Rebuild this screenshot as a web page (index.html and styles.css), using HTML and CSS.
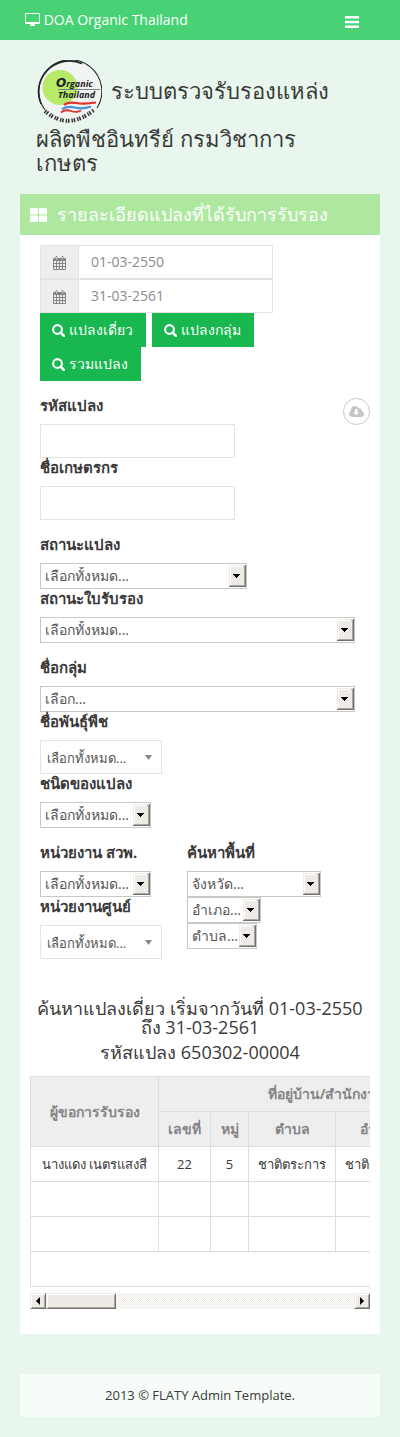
FILE: index.html
```
<!DOCTYPE html>
<html lang="th">
<head>
<meta charset="utf-8">
<meta name="viewport" content="width=device-width, initial-scale=1">
<title>DOA Organic Thailand</title>
<link rel="stylesheet" href="styles.css">
</head>
<body>
<svg class="defs" aria-hidden="true">
  <symbol id="calendar" viewBox="0 0 13 14"><path fill="currentColor" fill-rule="evenodd" d="M1 2h1.500V1Q2.500 0 3.500 0T4.500 1V2h4V1Q8.500 0 9.500 0T10.500 1V2H12Q13 2 13 3V13Q13 14 12 14H1Q0 14 0 13V3Q0 2 1 2ZM1 5V7H3V5ZM4 5V7H6V5ZM7 5V7H9V5ZM10 5V7H12V5ZM1 8V10H3V8ZM4 8V10H6V8ZM7 8V10H9V8ZM10 8V10H12V8ZM1 11V13H3V11ZM4 11V13H6V11ZM7 11V13H9V11ZM10 11V13H12V11ZM3.200 1V3.500H3.900V1ZM9.200 1V3.500H9.900V1Z"/></symbol>
  <symbol id="search" viewBox="0 0 13 13"><circle cx="5.500" cy="5.500" r="4.400" fill="none" stroke="currentColor" stroke-width="2.100"/><path d="M8.700 8.700L12 12" stroke="currentColor" stroke-width="2.500" stroke-linecap="round"/></symbol>
  <symbol id="drop" viewBox="0 0 17 22"><path fill="#eeebe6" d="M0 0h17v22H0z"/><path fill="#fff" d="M1 1h14v1H2v18H1z"/><path fill="#aaa6a0" d="M14 2h1v18H1v1h15V1h-2z"/><path fill="#73716d" d="M16 0h1v22H0v-1h16z"/><path d="M4 9h7v1h-1v1H9v1H8v1H7v-1H6v-1H5v-1H4z"/></symbol>
</svg>

<header class="navbar">
  <a class="brand" href="#"><svg width="15" height="13" viewBox="0 0 15 13" aria-hidden="true"><path fill="currentColor" fill-rule="evenodd" d="M1 0H14Q15 0 15 1V10Q15 11 14 11H9.500V12H10V13H5V12H5.500V11H1Q0 11 0 10V1Q0 0 1 0ZM1 1V9H14V1Z"/></svg> DOA Organic Thailand</a>
  <button class="menu" type="button" aria-label="Menu"><svg width="14" height="12" viewBox="0 0 14 12"><path fill="currentColor" d="M0 0h14v2.500H0zM0 4.800h14v2.400H0zM0 9.500h14V12H0z"/></svg></button>
</header>

<main class="content">
  <h1 class="title"><svg class="logo" viewBox="0 0 66 66" role="img" aria-label="Organic Thailand">
    <circle cx="33.500" cy="32.500" r="31.500" fill="#f1f4f1"/>
    <circle cx="24" cy="27.500" r="17.500" fill="#b7ea69"/>
    <path d="M9 50A31.500 31.500 0 1 1 61 48" fill="none" stroke="#222628" stroke-width="1.100"/>
    <path d="M5 44A31 31 0 0 1 46 3.500" fill="none" stroke="#222628" stroke-width="1.600"/>
    <path d="M22 29.500H64" stroke="#73828a" stroke-width="1"/>
    <text class="logo-word" x="20" y="27"><tspan class="logo-cap">O</tspan>rganic</text>
    <text class="logo-word" x="22" y="38">Thailand</text>
    <path d="M28 45Q32 41.500 40 43T60 42.500" fill="none" stroke="#e2302e" stroke-width="2.200"/>
    <path d="M26 49Q32 45.500 39 47.500T55 46.500" fill="none" stroke="#4b92dc" stroke-width="2.200"/>
    <path d="M25 52.500Q29 49 35 51T45 50.500" fill="none" stroke="#e2302e" stroke-width="1.800"/>
    <path d="M9 51Q32 71 58 50" fill="none" stroke="#303335" stroke-width="4" stroke-dasharray="1.400 .8 1.600 2"/>
  </svg> ระบบตรวจรับรองแหล่งผลิตพืชอินทรีย์ กรมวิชาการเกษตร</h1>

  <section class="box">
    <h2 class="box-title"><svg width="17" height="14" viewBox="0 0 17 14" aria-hidden="true"><path fill="currentColor" d="M1 0h6q1 0 1 1v4.500q0 1-1 1H1q-1 0-1-1V1Q0 0 1 0zM10 0h6q1 0 1 1v4.500q0 1-1 1h-6q-1 0-1-1V1q0-1 1-1zM1 7.500h6q1 0 1 1V13q0 1-1 1H1q-1 0-1-1V8.500q0-1 1-1zM10 7.500h6q1 0 1 1V13q0 1-1 1h-6q-1 0-1-1V8.500q0-1 1-1z"/></svg>รายละเอียดแปลงที่ได้รับการรับรอง</h2>
    <div class="box-content">
      <form class="filters">
        <div class="dates">
          <label class="date"><span class="addon"><svg width="13" height="14"><use href="#calendar"/></svg></span><input type="text" value="01-03-2550" aria-label="01-03-2550"></label>
          <label class="date"><span class="addon"><svg width="13" height="14"><use href="#calendar"/></svg></span><input type="text" value="31-03-2561" aria-label="31-03-2561"></label>
        </div>
        <div class="buttons">
          <button class="btn" type="button"><svg width="13" height="13"><use href="#search"/></svg>แปลงเดี่ยว</button>
          <button class="btn" type="button"><svg width="13" height="13"><use href="#search"/></svg>แปลงกลุ่ม</button>
          <button class="btn" type="button"><svg width="13" height="13"><use href="#search"/></svg>รวมแปลง</button>
        </div>

        <div class="group with-action">
          <div>
            <label class="label" for="code">รหัสแปลง</label>
            <input class="text" id="code" type="text">
            <label class="label" for="farmer">ชื่อเกษตรกร</label>
            <input class="text" id="farmer" type="text">
          </div>
          <button class="download" type="button" aria-label="Download"><svg width="15" height="11" viewBox="0 0 15 11"><path fill="currentColor" fill-rule="evenodd" d="M3.500 11Q0 11 0 7.700Q0 5.500 2 4.500Q2 0 6 0Q9 0 10 2.500Q12.600 1.700 12.800 5Q15 5.700 15 8Q15 11 12 11ZM6 3V6H4L7.200 9.200L10.400 6H8.400V3Z"/></svg></button>
        </div>

        <div class="group">
          <label class="label" for="status">สถานะแปลง</label>
          <span class="select medium"><select id="status"><option>เลือกทั้งหมด...</option></select><svg width="17" height="22"><use href="#drop"/></svg></span>
          <label class="label" for="cert">สถานะใบรับรอง</label>
          <span class="select wide"><select id="cert"><option>เลือกทั้งหมด...</option></select><svg width="17" height="22"><use href="#drop"/></svg></span>
        </div>

        <div class="group">
          <label class="label" for="grp">ชื่อกลุ่ม</label>
          <span class="select wide"><select id="grp"><option>เลือก...</option></select><svg width="17" height="22"><use href="#drop"/></svg></span>
          <label class="label" for="plant">ชื่อพันธุ์พืช</label>
          <span class="select chosen"><select id="plant"><option>เลือกทั้งหมด...</option></select><svg width="7" height="5" viewBox="0 0 7 5"><path fill="#888" d="M0 0h7L3.500 5z"/></svg></span>
          <label class="label" for="kind">ชนิดของแปลง</label>
          <span class="select small"><select id="kind"><option>เลือกทั้งหมด...</option></select><svg width="17" height="22"><use href="#drop"/></svg></span>
        </div>

        <div class="group columns">
          <div>
            <label class="label" for="office">หน่วยงาน สวพ.</label>
            <span class="select small"><select id="office"><option>เลือกทั้งหมด...</option></select><svg width="17" height="22"><use href="#drop"/></svg></span>
            <label class="label" for="center">หน่วยงานศูนย์</label>
            <span class="select chosen"><select id="center"><option>เลือกทั้งหมด...</option></select><svg width="7" height="5" viewBox="0 0 7 5"><path fill="#888" d="M0 0h7L3.500 5z"/></svg></span>
          </div>
          <div>
            <label class="label" for="province">ค้นหาพื้นที่</label>
            <span class="select province"><select id="province"><option>จังหวัด...</option></select><svg width="17" height="22"><use href="#drop"/></svg></span>
            <span class="select district"><select aria-label="อำเภอ"><option>อำเภอ...</option></select><svg width="17" height="22"><use href="#drop"/></svg></span>
            <span class="select subdistrict"><select aria-label="ตำบล"><option>ตำบล...</option></select><svg width="17" height="22"><use href="#drop"/></svg></span>
          </div>
        </div>
      </form>

      <div class="results">
        <h3>ค้นหาแปลงเดี่ยว เริ่มจากวันที่ 01-03-2550 ถึง 31-03-2561</h3>
        <h3>รหัสแปลง 650302-00004</h3>
      </div>

      <div class="table-wrap">
        <table>
          <colgroup><col class="c-name"><col class="c-no"><col class="c-moo"><col class="c-area"><col class="c-area"><col class="c-prov"></colgroup>
          <thead>
            <tr><th rowspan="2">ผู้ขอการรับรอง</th><th colspan="5">ที่อยู่บ้าน/สำนักงาน</th></tr>
            <tr><th>เลขที่</th><th>หมู่</th><th>ตำบล</th><th>อำเภอ</th><th></th></tr>
          </thead>
          <tbody>
            <tr><td>นางแดง เนตรแสงสี</td><td>22</td><td>5</td><td>ชาติตระการ</td><td>ชาติตระการ</td><td></td></tr>
            <tr><td></td><td></td><td></td><td></td><td></td><td></td></tr>
            <tr><td></td><td></td><td></td><td></td><td></td><td></td></tr>
            <tr><td colspan="6"></td></tr>
          </tbody>
        </table>
      </div>
      <div class="scrollbar" aria-hidden="true">
        <span class="bevel arrow"><svg width="4" height="8" viewBox="0 0 4 8"><path d="M4 0v8L0 4z"/></svg></span>
        <span class="bevel thumb"></span>
        <span class="track"></span>
        <span class="bevel arrow"><svg width="4" height="8" viewBox="0 0 4 8"><path d="M0 0v8l4-4z"/></svg></span>
      </div>
    </div>
  </section>

  <footer class="footer">2013 © FLATY Admin Template.</footer>
</main>
</body>
</html>
```

FILE: styles.css
```
* { box-sizing: border-box; }
body {
  margin: 0;
  background: #e9f6ed;
  color: #393939;
  font: 13px/18px "Open Sans", sans-serif;
}
button, input, select { font: inherit; color: inherit; border-radius: 0; margin: 0; }
svg { flex: none; }
.defs { display: none; }

.navbar {
  display: flex;
  align-items: center;
  justify-content: space-between;
  height: 40px;
  padding: 0 41px 0 25px;
  background: #49d176;
  color: #fff;
}
.brand { color: #fff; font-size: 14px; line-height: 20px; text-decoration: none; }
.brand svg { vertical-align: -1px; }
.menu { display: flex; padding: 4px 0 0; border: 0; background: none; }

.content { padding: 20px; }
.title {
  margin: 0 0 20px;
  padding: 0 44px 0 16px;
  font-size: 22px;
  line-height: 24px;
  font-weight: 400;
}
.logo { width: 66px; height: 66px; margin-right: 3px; vertical-align: middle; }
.logo-word { font: italic 700 9px "Open Sans", sans-serif; fill: #1d2022; }
.logo-cap { font: italic 700 12px "DejaVu Sans", sans-serif; }

.box-title {
  display: flex;
  align-items: center;
  gap: 10px;
  margin: 0;
  padding: 10px;
  background: #aee8a0;
  color: #fff;
  font-size: 18px;
  line-height: 21px;
  font-weight: 400;
}
.box-content { padding: 10px 10px 25px; background: #fff; }
.filters { padding: 0 0 0 10px; }

.date { display: flex; width: 233px; height: 34px; }
.addon {
  display: flex;
  align-items: center;
  justify-content: center;
  width: 38px;
  padding-top: 2px;
  border: 1px solid #e3e3e3;
  border-right: 0;
  background: #eee;
  color: #858585;
}
.date input {
  flex: 1;
  min-width: 0;
  padding: 0 12px;
  border: 1px solid #e3e3e3;
  background: #fff;
  color: #8b8b8b;
  font-size: 14px;
}
.buttons { display: flex; flex-wrap: wrap; column-gap: 6px; max-width: 233px; }
.btn {
  display: flex;
  align-items: center;
  gap: 4px;
  height: 34px;
  padding: 0 13px 0 12px;
  border: 0;
  background: #18b74f;
  color: #fff;
  font-size: 14px;
}

.group { padding-top: 15px; }
.with-action { display: flex; justify-content: space-between; align-items: flex-start; }
.columns { display: grid; grid-template-columns: 122px 1fr; gap: 25px; }
.label { display: block; margin-bottom: 10px; font-size: 15px; font-weight: 700; line-height: 18px; }
.text { display: block; width: 195px; height: 34px; padding: 0 12px; border: 1px solid #e3e3e3; background: #fff; }
.download {
  display: flex;
  align-items: center;
  justify-content: center;
  width: 27px;
  height: 27px;
  margin-top: 2px;
  padding: 0;
  border: 1px solid #c9c9c9;
  border-radius: 50%;
  background: #fff;
  color: #c4c4c4;
}

.select { display: grid; align-items: center; height: 26px; border: 1px solid #c8c8c8; background: #fff; }
.select select {
  grid-area: 1 / 1;
  width: 100%;
  height: 100%;
  padding: 0 4px;
  border: 0;
  background: none;
  color: #555;
  font-size: 14px;
  appearance: none;
}
.select svg { grid-area: 1 / 1; justify-self: end; pointer-events: none; }
.medium { width: 207px; }
.wide { max-width: 315px; }
.small { width: 111px; }
.province { width: 134px; }
.district { width: 74px; }
.subdistrict { width: 70px; }
.chosen { width: 122px; height: 34px; border-color: #e3e3e3; }
.chosen select { padding: 2px 6px 0; font-size: 13px; }
.chosen svg { margin-right: 9px; }

.results { padding: 40px 0 8px; text-align: center; }
.results h3 { margin: 0 0 6px; font-size: 18px; line-height: 19px; font-weight: 400; }

.table-wrap { overflow: hidden; }
table { width: 464px; table-layout: fixed; border-collapse: collapse; text-align: center; }
th, td { height: 35px; padding: 0; border: 1px solid #ddd; white-space: nowrap; }
th { background: #eee; color: #858585; font-size: 14px; font-weight: 700; }
.c-name { width: 128px; }
.c-no { width: 52px; }
.c-moo { width: 38px; }
.c-area { width: 87px; }
.c-prov { width: 72px; }

.scrollbar { display: flex; height: 16px; margin-top: 6px; }
.bevel {
  display: flex;
  align-items: center;
  justify-content: center;
  border: 1px solid #eeebe6;
  border-right-color: #73716d;
  border-bottom-color: #73716d;
  background: #eeebe6;
  box-shadow: inset 1px 1px #fff, inset -1px -1px #aaa6a0;
}
.arrow { width: 16px; }
.thumb { width: 70px; }
.track { flex: 1; background: repeating-conic-gradient(#eeebe6 0 25%, #fff 0 50%) 0 0 / 2px 2px; }

.footer {
  margin-top: 40px;
  padding: 12px;
  background: #f6fcf8;
  text-align: center;
  line-height: 19px;
}
```
